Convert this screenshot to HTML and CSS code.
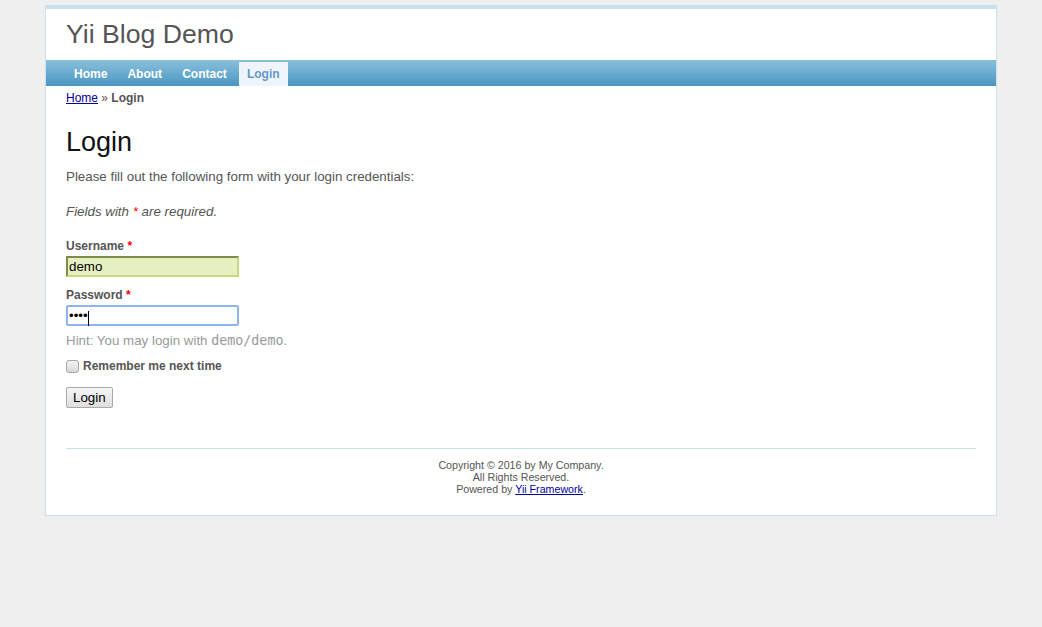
FILE: index.html
```html
<!DOCTYPE html>
<html lang="en">
<head>
<meta charset="utf-8">
<title>Yii Blog Demo - Login</title>
<link rel="stylesheet" href="styles.css">
</head>
<body>
<div class="page">
  <header class="header">
    <div class="logo">Yii Blog Demo</div>
  </header>
  <nav class="mainmenu">
    <ul>
      <li><a href="#">Home</a></li>
      <li><a href="#">About</a></li>
      <li><a href="#">Contact</a></li>
      <li class="active"><a href="#">Login</a></li>
    </ul>
  </nav>
  <div class="breadcrumbs"><a href="#">Home</a> &raquo; <span>Login</span></div>
  <main class="content">
    <h1>Login</h1>
    <p>Please fill out the following form with your login credentials:</p>
    <form class="form">
      <p class="note">Fields with <span class="required">*</span> are required.</p>
      <div class="row user">
        <label for="username">Username <span class="required">*</span></label>
        <input class="field success" id="username" type="text" value="demo">
      </div>
      <div class="row">
        <label for="password">Password <span class="required">*</span></label>
        <span class="field-wrap">
          <input class="field focus" id="password" type="password" value="demo">
          <span class="caret"></span>
        </span>
        <p class="hint">Hint: You may login with <code>demo/demo</code>.</p>
      </div>
      <div class="row remember">
        <input class="check" id="remember" type="checkbox">
        <label for="remember">Remember me next time</label>
      </div>
      <div class="row buttons">
        <button type="button" class="btn">Login</button>
      </div>
    </form>
  </main>
  <footer class="footer">
    Copyright &copy; 2016 by My Company.<br>
    All Rights Reserved.<br>
    Powered by <a href="#">Yii Framework</a>.
  </footer>
</div>
</body>
</html>
```

FILE: styles.css
```css
html, body {
  margin: 0;
  padding: 0;
  background: #efefef;
  color: #555;
  font: normal 13.333px "Liberation Sans", Arial, sans-serif;
}
.page {
  width: 950px;
  margin: 5px auto;
  background: #fff;
  border: 1px solid #c9e0ed;
}
.header {
  border-top: 3px solid #c9e0ed;
}
.logo {
  padding: 10px 20px;
  font-size: 26.667px;
  color: #555;
}
.mainmenu {
  background: linear-gradient(#8ac0dc, #4a96c2);
}
.mainmenu ul {
  margin: 0;
  padding: 6px 20px 5px;
  list-style: none;
}
.mainmenu li {
  display: inline;
}
.mainmenu li + li {
  margin-left: 0.4px;
}
.mainmenu li a {
  color: #fff;
  font-size: 12px;
  font-weight: bold;
  text-decoration: none;
  padding: 5px 8px;
}
.mainmenu li.active a {
  color: #6399cd;
  background: #eff4fa;
}
.breadcrumbs {
  font-size: 12px;
  padding: 5px 20px;
}
.breadcrumbs a { color: #009; }
.breadcrumbs span { font-weight: bold; }
.content {
  padding: 19px 20px 20px;
}
h1 {
  font-size: 27px;
  line-height: 1;
  font-weight: normal;
  color: #111;
  margin: 0 0 13px;
}
p { margin: 0 0 20px; }
.note { font-style: italic; margin-bottom: 20px; }
.required { color: #f00; }
.row { margin: 0; }
.user { margin-bottom: 11px; }
label {
  display: block;
  font-weight: bold;
  font-size: 12px;
}
.field {
  box-sizing: border-box;
  width: 173px;
  height: 21px;
  margin: 3px 0 0;
  padding: 1px 1px;
  font: 13.333px "Liberation Sans", Arial, sans-serif;
  color: #000;
  display: block;
}
.field.success {
  background: #e6efc2;
  border: 2px solid #c6d880;
  border-top-color: #7f8b47;
  border-left-color: #7f8b47;
}
.field.focus {
  background: #fff;
  border: 2px solid #8eb4ec;
  border-radius: 2px;
  outline: none;
}
.field-wrap {
  position: relative;
  display: block;
  width: 173px;
}
.caret {
  position: absolute;
  left: 22px;
  top: 6px;
  width: 1px;
  height: 15px;
  background: #000;
}
.hint {
  margin: 7px 0 0;
  color: #999;
}
code {
  font: 13.333px "DejaVu Sans Mono", monospace;
}
.remember {
  display: flex;
  align-items: center;
  margin-top: 11px;
}
.remember label { display: inline; margin-left: 4px; }
.check {
  appearance: none;
  -webkit-appearance: none;
  margin: 0;
  width: 13px;
  height: 13px;
  border: 1px solid #a6a6a6;
  border-radius: 3px;
  background: linear-gradient(#f4f4f4, #d8d8d8);
}
.buttons { margin-top: 14px; margin-bottom: 10px; }
.btn {
  font: 13.333px "Liberation Sans", Arial, sans-serif;
  color: #000;
  height: 21px;
  padding: 1px 6px;
  background: linear-gradient(#f6f6f6, #dedede);
  border: 1px solid #a9a9a9;
  border-radius: 2px;
}
.footer {
  padding: 10px;
  margin: 10px 20px;
  font-size: 10.667px;
  text-align: center;
  border-top: 1px solid #c9e0ed;
}
.footer a { color: #009; }
```
